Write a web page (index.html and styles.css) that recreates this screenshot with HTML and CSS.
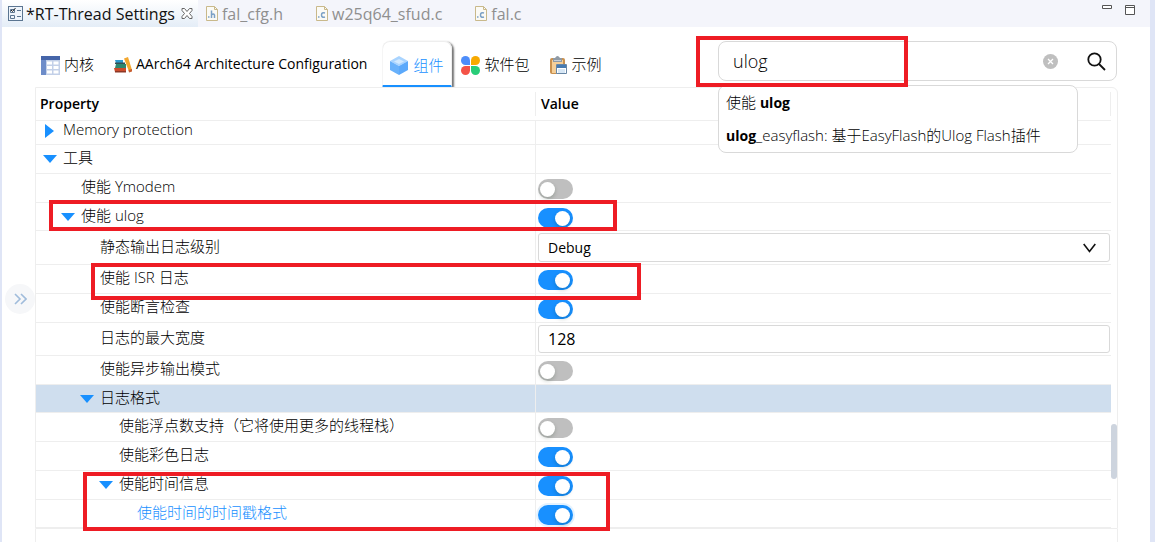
FILE: index.html
```html
<!DOCTYPE html>
<html lang="zh-CN">
<head>
	<meta charset="UTF-8">
	<meta name="viewport" content="width=device-width, initial-scale=1.0">
	<title>RT-Thread Settings</title>
	<link rel="stylesheet" href="styles.css">
</head>

<body>

	<!-- Editor tabs -->
	<header class="editor-bar">
		<div class="editor-tab active">
			<svg width="15" height="16" viewBox="0 0 15 16" fill="none" stroke="#5b7591">
				<rect x="0.5" y="0.5" width="14" height="14" fill="#eef4fb"/>
				<path d="M2.5 3.5h4v3h-4zM2.5 9.5h4v3h-4zM9 4.500h4M9 10.500h4"/>
				<path d="M3 4l1.500 1.500L7.500 2" stroke="#222"/>
			</svg>
			<span>*RT-Thread Settings</span>
			<button class="close-tab" aria-label="Close">
				<svg width="12" height="11" viewBox="0 0 12 11" fill="#fff" stroke="#666"><path d="M1 .5h2.500L6 3.500 8.500.5H11v2L8.500 5.500 11 8.500v2H8.500L6 7.500l-2.500 3H1v-2l2.500-3L1 2.500z"/></svg>
			</button>
		</div>
		<div class="editor-tab">
			<svg width="12" height="15" viewBox="0 0 12 15"><path d="M.5.5h8l3 3v11H.5z" fill="#fbfaf5" stroke="#c9b98b"/><path d="M8.500.5v3h3" fill="none" stroke="#c9b98b"/><path d="M2 11h1.500M5.500 4.500V12M5.500 9q2-2 3 0v3" fill="none" stroke="#7ba0c6" stroke-width="1.500"/></svg>
			<span>fal_cfg.h</span>
		</div>
		<div class="editor-tab">
			<svg width="12" height="15" viewBox="0 0 12 15"><path d="M.5.5h8l3 3v11H.5z" fill="#fbfaf5" stroke="#c9b98b"/><path d="M8.500.5v3h3" fill="none" stroke="#c9b98b"/><path d="M2 11h1.500M9 7q-3.500-1-3.500 2T9 11" fill="none" stroke="#7ba0c6" stroke-width="1.500"/></svg>
			<span>w25q64_sfud.c</span>
		</div>
		<div class="editor-tab">
			<svg width="12" height="15" viewBox="0 0 12 15"><path d="M.5.5h8l3 3v11H.5z" fill="#fbfaf5" stroke="#c9b98b"/><path d="M8.500.5v3h3" fill="none" stroke="#c9b98b"/><path d="M2 11h1.500M9 7q-3.500-1-3.500 2T9 11" fill="none" stroke="#7ba0c6" stroke-width="1.500"/></svg>
			<span>fal.c</span>
		</div>
		<div class="window-buttons">
			<button aria-label="Minimize"><svg width="10" height="10" viewBox="0 0 10 10"><path d="M.5.5h9v3h-9z" fill="#fff" stroke="#555"/></svg></button>
			<button aria-label="Maximize"><svg width="10" height="10" viewBox="0 0 10 10"><path d="M.5.5h9v9h-9zM.5 2.500h9" fill="#fff" stroke="#555"/></svg></button>
		</div>
	</header>

	<main class="editor">
		<aside class="side">
			<button class="expand" aria-label="Expand">
				<svg width="13" height="12" viewBox="0 0 13 12" fill="none" stroke="#a0bcdb" stroke-width="1.600"><path d="M1 1l5 5-5 5M7 1l5 5-5 5"/></svg>
			</button>
		</aside>

		<section class="settings">
			<!-- Category tabs and search -->
			<div class="toolbar">
				<nav class="tabs">
					<button class="tab">
						<svg width="19" height="19" viewBox="0 0 19 19"><path fill="#c3d0e8" d="M0 0h19v19H0z"/><path fill="#4565a9" d="M0 0h19v4H0z"/><path fill="#6d8cc9" d="M0 4h5v15H0z"/><path fill="#fff" d="M6 5.500h5v3H6zM12.500 5.500h5v3h-5zM6 10h5v3H6zM12.500 10h5v3h-5zM6 14.500h5v3H6zM12.500 14.500h5v3h-5z"/></svg>
						<span>内核</span>
					</button>
					<button class="tab latin">
						<svg width="18" height="17" viewBox="0 0 18 17"><path fill="#2c9bd0" d="M1 3h8v3H2z"/><path fill="#344f56" d="M1 5.500h10V7H1z"/><path fill="#2d8770" d="M2 7h10v4H1z"/><path fill="#cb4b2b" d="M0 11h12v4H1z"/><path fill="#8d3827" d="M1 14h11v1.500H1z"/><path fill="#f3a72f" d="M10 1.500L14 0l4 13-3 1.500z"/><path fill="#c85f31" d="M14.500 13l3.500-1v2.500l-3 1z"/></svg>
						<span>AArch64 Architecture Configuration</span>
					</button>
					<button class="tab active">
						<svg width="18" height="19" viewBox="0 0 18 19"><path fill="#a9d4ff" d="M9 0l9 5-9 5-9-5z"/><path fill="#d1e9ff" d="M9 3l5 2.500L9 8 4 5.500z"/><path fill="#68b1fb" d="M0 5l9 5v9l-9-5z"/><path fill="#5ba9fb" d="M18 5l-9 5v9l9-5z"/></svg>
						<span>组件</span>
					</button>
					<button class="tab">
						<svg width="19" height="19" viewBox="0 0 19 19"><path fill="#4d8dfa" d="M4.500 0a4.500 4.500 0 0 1 4.500 4.500V9H4.500a4.500 4.500 0 0 1 0-9z"/><path fill="#f7a900" d="M14.500 0a4.500 4.500 0 0 1 0 9H10V4.500A4.500 4.500 0 0 1 14.500 0z"/><path fill="#f45348" d="M4.500 10H9v4.500A4.500 4.500 0 1 1 4.500 10z"/><path fill="#28cd78" d="M10 10h4.500a4.500 4.500 0 1 1-4.500 4.500z"/></svg>
						<span>软件包</span>
					</button>
					<button class="tab">
						<svg width="17" height="19" viewBox="0 0 17 19"><rect y="2" width="15" height="16" rx="2" fill="#c9914f"/><path fill="#f5cf98" d="M2 4h11v13H2z"/><path fill="#8f9aa5" d="M3 2h2q2.500-4 5 0h2v4H3z"/><path fill="#c9d0d7" d="M4 4h7v1H4z"/><path fill="#fff" stroke="#6786a5" d="M6.500 8.500h10v9h-10z"/><path fill="#477bb1" d="M7 9h9v3H7z"/><path fill="#d7e7f5" d="M8 13h7v4H8z"/></svg>
						<span>示例</span>
					</button>
				</nav>

				<div class="search">
					<div class="search-box">
						<input type="text" value="ulog" aria-label="Search">
						<button class="clear" aria-label="Clear"><svg width="15" height="15" viewBox="0 0 15 15"><circle cx="7.500" cy="7.500" r="7.500" fill="#bfbfbf"/><path d="M5 5l5 5M10 5l-5 5" stroke="#fff" stroke-width="1.300"/></svg></button>
						<button class="go" aria-label="Search"><svg width="19" height="19" viewBox="0 0 19 19" fill="none" stroke="#111" stroke-width="1.800"><circle cx="7.500" cy="7.500" r="6.200"/><path d="M12 12l6 6"/></svg></button>
					</div>
					<div class="suggestions">
						<div>使能 <b>ulog</b></div>
						<div><b>ulog</b>_easyflash: 基于EasyFlash的Ulog Flash插件</div>
					</div>
					<i class="mark mark-search"></i>
				</div>
			</div>

			<!-- Property tree -->
			<div class="panel">
				<table class="tree">
					<thead>
						<tr><th>Property</th><th>Value</th></tr>
					</thead>
					<tbody>
						<tr class="cut">
							<td class="level-1"><i class="arrow closed"></i>Memory protection</td>
							<td></td>
						</tr>
						<tr>
							<td class="level-1"><i class="arrow"></i>工具</td>
							<td></td>
						</tr>
						<tr>
							<td class="level-2"><label for="ymodem">使能 Ymodem</label></td>
							<td><input type="checkbox" class="switch" id="ymodem"></td>
						</tr>
						<tr class="short">
							<td class="level-2"><i class="arrow"></i><label for="ulog">使能 ulog</label><i class="mark mark-ulog"></i></td>
							<td><input type="checkbox" class="switch" id="ulog" checked></td>
						</tr>
						<tr class="field-row">
							<td class="level-3"><label for="level">静态输出日志级别</label></td>
							<td>
								<div class="select-box">
									<select id="level" class="field">
										<option>Debug</option>
									</select>
									<svg width="13" height="10" viewBox="0 0 13 10" fill="none" stroke="#111" stroke-width="1.600"><path d="M.7 1l5.800 7.500L12.300 1"/></svg>
								</div>
							</td>
						</tr>
						<tr>
							<td class="level-3"><label for="isr">使能 ISR 日志</label><i class="mark mark-isr"></i></td>
							<td><input type="checkbox" class="switch" id="isr" checked></td>
						</tr>
						<tr>
							<td class="level-3"><label for="assert">使能断言检查</label></td>
							<td><input type="checkbox" class="switch" id="assert" checked></td>
						</tr>
						<tr class="field-row">
							<td class="level-3"><label for="width">日志的最大宽度</label></td>
							<td><input type="text" class="field number" id="width" value="128"></td>
						</tr>
						<tr>
							<td class="level-3"><label for="async">使能异步输出模式</label></td>
							<td><input type="checkbox" class="switch" id="async"></td>
						</tr>
						<tr class="short selected">
							<td class="level-3"><i class="arrow"></i>日志格式</td>
							<td></td>
						</tr>
						<tr>
							<td class="level-4"><label for="float">使能浮点数支持（它将使用更多的线程栈）</label></td>
							<td><input type="checkbox" class="switch" id="float"></td>
						</tr>
						<tr>
							<td class="level-4"><label for="color">使能彩色日志</label></td>
							<td><input type="checkbox" class="switch" id="color" checked></td>
						</tr>
						<tr>
							<td class="level-4"><i class="arrow"></i><label for="time">使能时间信息</label><i class="mark mark-time"></i></td>
							<td><input type="checkbox" class="switch" id="time" checked></td>
						</tr>
						<tr class="short current">
							<td class="level-5"><label for="stamp">使能时间的时间戳格式</label></td>
							<td><input type="checkbox" class="switch" id="stamp" checked></td>
						</tr>
					</tbody>
				</table>
				<div class="thumb"></div>
			</div>
			<div class="panel-foot"></div>
		</section>
	</main>

</body>
</html>
```
FILE: styles.css
```css
* {
	box-sizing: border-box;
}

body {
	margin: 0;
	min-height: 100vh;
	display: flex;
	flex-direction: column;
	overflow: hidden;
	background: #fff;
	border-left: 2px solid #dfe5f6;
	border-right: 5px solid #dfe5f6;
	font-family: "Open Sans", "Noto Sans CJK SC", sans-serif;
	font-size: 15px;
	color: #000;
}

button,
input,
select {
	font-family: inherit;
	font-size: inherit;
	font-weight: inherit;
	color: inherit;
}

button {
	padding: 0;
	border: 0;
	background: none;
}

svg {
	display: block;
	flex: none;
}

/* Editor tabs */
.editor-bar {
	display: flex;
	height: 27px;
	background: #f4f5fb;
	font-size: 16px;
}

.editor-tab {
	display: flex;
	align-items: center;
	gap: 4px;
	padding: 0 25px 0 8px;
	color: #8f8f8f;
}

.editor-tab.active {
	gap: 3px;
	padding: 0 5px 0 6px;
	background: linear-gradient(#fff, #e4edf7);
	color: #111;
}

.close-tab {
	margin-left: 3px;
}

.window-buttons {
	display: flex;
	align-items: flex-start;
	gap: 13px;
	margin-left: auto;
	padding: 5px 15px 0 0;
}

.editor {
	flex: 1;
	display: flex;
	padding-right: 32px;
}

.side {
	width: 33px;
	padding: 257px 0 0 3px;
}

.expand {
	display: flex;
	align-items: center;
	justify-content: center;
	width: 30px;
	height: 30px;
	border-radius: 50%;
	background: #f6f7f9;
}

.settings {
	flex: 1;
	display: flex;
	flex-direction: column;
	font-weight: 300;
}

/* Toolbar */
.toolbar {
	display: flex;
	justify-content: space-between;
	padding: 14px 1px 0 0;
}

.tabs {
	display: flex;
}

.tab {
	display: flex;
	align-items: center;
	gap: 4px;
	height: 46px;
	padding: 2px 15px 0 6px;
	white-space: nowrap;
}

.tab span {
	padding-bottom: 3px;
}

.tab.latin {
	padding-left: 5px;
	font-size: 14px;
	font-weight: 400;
}

.tab.active {
	gap: 5px;
	padding: 4px 8px 0 7px;
	margin-right: 3px;
	border: 1px solid #eee;
	border-bottom: 2px solid #1890ff;
	border-radius: 8px 8px 0 0;
	box-shadow: 2px 1px 2px #777;
	clip-path: inset(-2px -6px 0 0);
	color: #1890ff;
}

.search {
	position: relative;
	width: 399px;
}

.search-box {
	display: flex;
	align-items: center;
	height: 40px;
	padding: 0 10px 0 14px;
	border: 1px solid #d9d9d9;
	border-radius: 8px;
}

.search-box input {
	flex: 1;
	min-width: 0;
	padding: 0;
	border: 0;
	outline: 0;
	background: none;
	font-size: 18px;
}

.go {
	margin-left: 29px;
}

.suggestions {
	position: absolute;
	z-index: 2;
	top: 44px;
	left: 0;
	width: 360px;
	border: 1px solid #d9d9d9;
	border-radius: 8px;
	background: #fff;
	line-height: 32px;
	padding-left: 7px;
	white-space: nowrap;
}

.suggestions b {
	font-size: 14px;
	font-weight: 700;
}

/* Property tree */
.panel {
	position: relative;
	padding-right: 6px;
	border: 1px solid #eee;
	border-radius: 0 6px 0 0;
}

.tree {
	width: 100%;
	border-collapse: separate;
	border-spacing: 0;
	table-layout: fixed;
}

.tree th {
	position: relative;
	height: 33px;
	padding: 0 5px 2px;
	border-bottom: 1px solid #eee;
	text-align: left;
	font-size: 14px;
	font-weight: 600;
}

.tree th:first-child {
	width: 500px;
	padding-left: 4px;
}

.tree th::after {
	content: "";
	position: absolute;
	top: 4px;
	bottom: 4px;
	right: 0;
	border-right: 1px solid #eee;
}

.tree td {
	position: relative;
	height: 29px;
	padding: 0 0 4px;
	border-bottom: 1px solid #eee;
	line-height: 22px;
	white-space: nowrap;
}

.tree td:first-child {
	border-right: 1px solid #eee;
}

.tree td:last-child {
	padding: 2px 1px 2px 2px;
}

.tree .short td {
	height: 28px;
}

.tree .cut td:first-child {
	height: 24px;
	padding-bottom: 6px;
	line-height: 16px;
}

.tree .cut td {
	height: 24px;
}

.tree .field-row td {
	height: 33px;
}

.tree .selected td {
	background: #cfdeee;
}

.tree .current td {
	color: #1890ff;
}

.tree .level-1 {
	padding-left: 27px;
}

.tree .level-2 {
	padding-left: 45px;
}

.tree .level-3 {
	padding-left: 64px;
}

.tree .level-4 {
	padding-left: 83px;
}

.tree .level-5 {
	padding-left: 101px;
}

.arrow {
	display: inline-block;
	margin-left: -20px;
	margin-right: 6px;
	border: 7px solid transparent;
	border-top: 8px solid #1890ff;
	border-bottom: 0;
}

.arrow.closed {
	margin-left: -18px;
	margin-right: 9px;
	border: 7px solid transparent;
	border-left: 9px solid #1890ff;
	border-right: 0;
	vertical-align: middle;
}

.switch {
	appearance: none;
	display: block;
	width: 35px;
	height: 20px;
	margin: 2px 0 0;
	padding: 3px 3px 2px 2px;
	border-radius: 10px;
	background: #bfbfbf;
}

.switch::before {
	content: "";
	display: block;
	width: 15px;
	height: 15px;
	border-radius: 50%;
	background: #fff;
	box-shadow: 0 2px 4px rgba(0, 35, 11, 0.2);
}

.switch:checked {
	background: #1890ff;
}

.switch:checked::before {
	margin-left: auto;
}

.current .switch {
	box-shadow: 0 0 0 2px #e3f2ff;
}

.field {
	display: block;
	appearance: none;
	width: 100%;
	height: 29px;
	padding: 0 9px;
	border: 1px solid #d9d9d9;
	border-radius: 3px;
	background: #fff;
	font-size: 14px;
	font-weight: 400;
}

.field.number {
	height: 28px;
	font-size: 16px;
}

.select-box {
	display: grid;
	align-items: center;
}

.select-box > * {
	grid-area: 1 / 1;
}

.select-box svg {
	justify-self: end;
	margin-right: 14px;
	pointer-events: none;
}

.thumb {
	position: absolute;
	right: 0;
	top: 336px;
	width: 6px;
	height: 55px;
	border-radius: 3px;
	background: #cdd4de;
}

.panel-foot {
	flex: 1;
	border: 1px solid #eee;
	border-width: 0 1px;
}

/* Red marker frames */
.mark {
	position: absolute;
	z-index: 3;
	border: 4px solid #ee1c24;
	pointer-events: none;
}

.mark-search {
	left: -22px;
	top: -5px;
	width: 212px;
	height: 51px;
}

.mark-ulog {
	left: 13px;
	top: -3px;
	width: 568px;
	height: 31px;
}

.mark-isr {
	left: 55px;
	top: -2px;
	width: 550px;
	height: 37px;
}

.mark-time {
	left: 47px;
	top: 1px;
	width: 527px;
	height: 59px;
}
```
